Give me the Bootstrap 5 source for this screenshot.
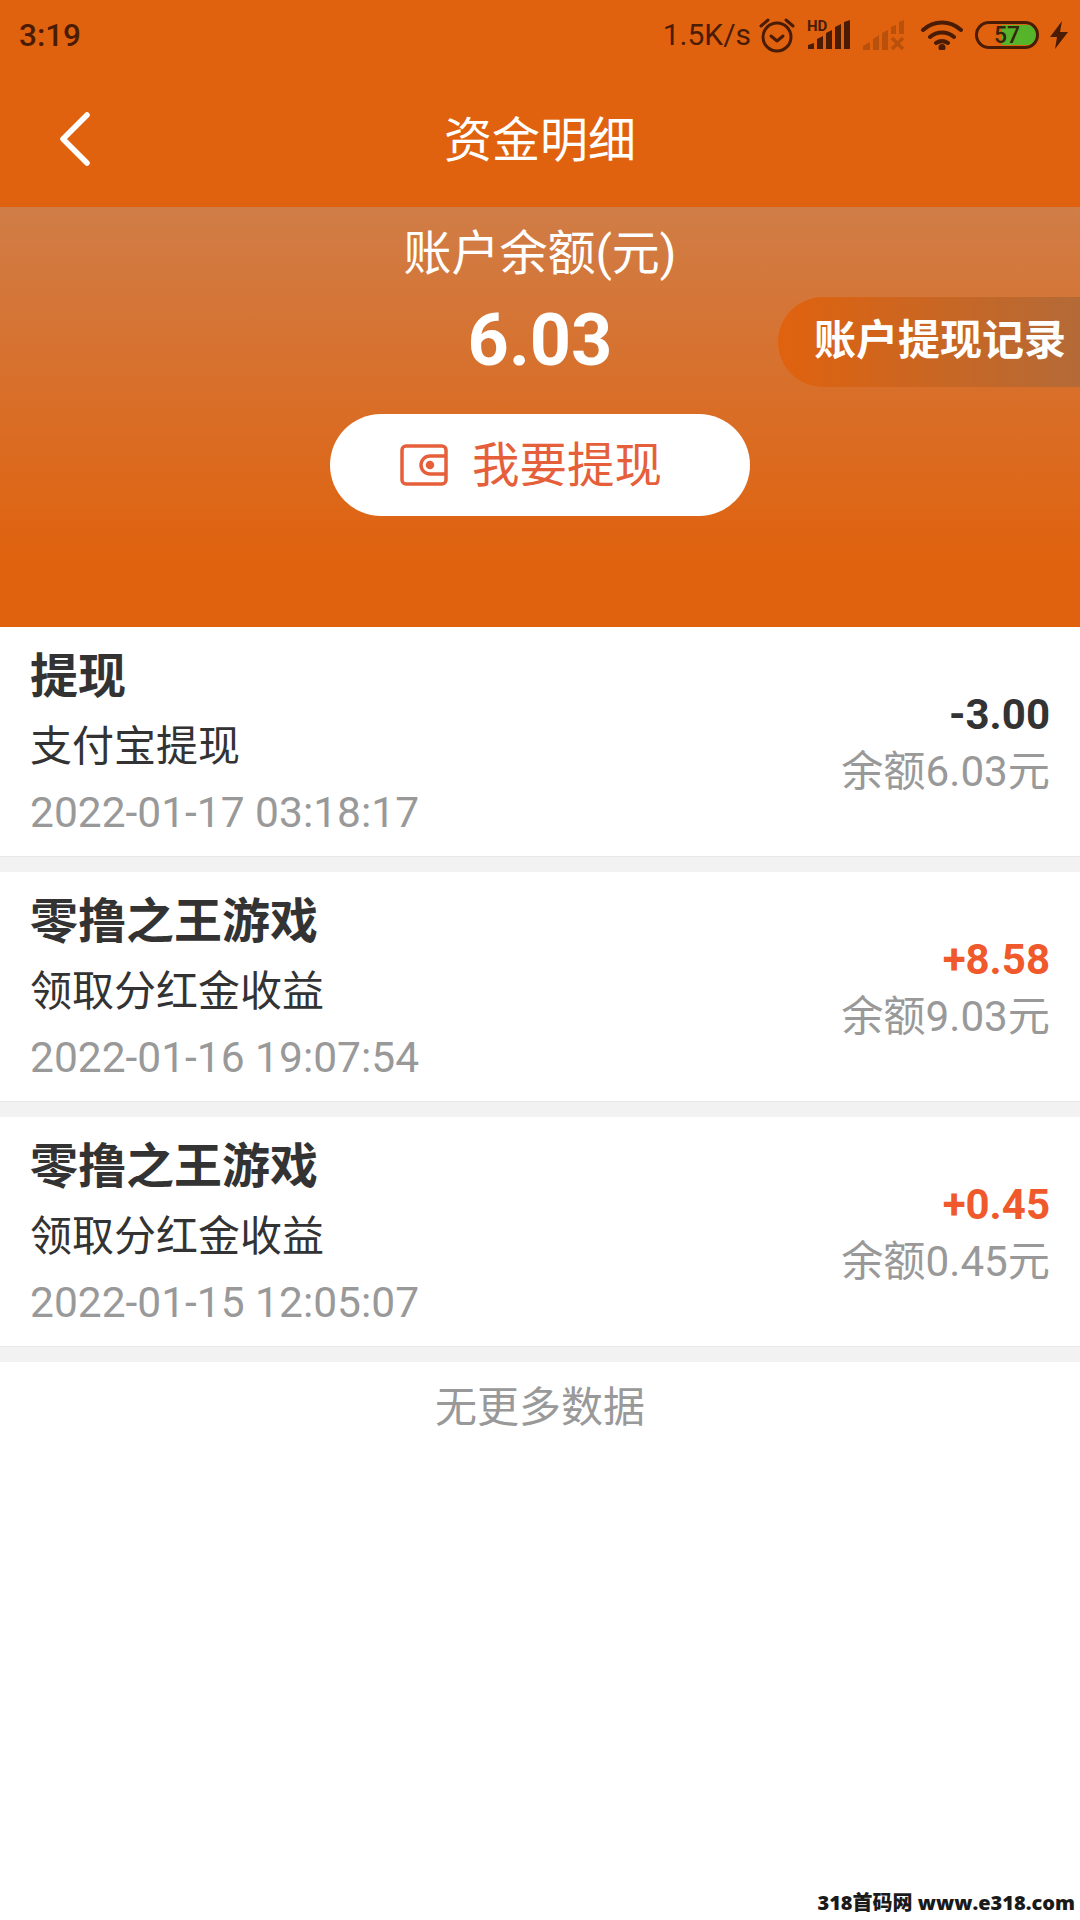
<!DOCTYPE html>
<html lang="zh">
<head>
  <meta charset="UTF-8">
  <title>资金明细</title>
  <meta name="viewport" content="width=device-width, initial-scale=1">
  <link href="https://cdn.jsdelivr.net/npm/bootstrap@5.3.0/dist/css/bootstrap.min.css" rel="stylesheet">
  <style>
    body { font-family: Roboto, "Noto Sans CJK SC", sans-serif; background: #fff; width: 1080px; height: 1920px; overflow: hidden; position: relative; }
    .top-bar { background: #e0620e; height: 207px; }
    .status-row { height: 70px; padding: 0 12px 0 19px; color: #4a1c05; }
    .status-time { font-size: 31.5px; font-weight: 500; line-height: 1; padding-top: 2px; }
    .status-speed { font-size: 30px; line-height: 1; white-space: nowrap; }
    .batt-icon { margin: 0 3px 0 4px; }
    .title-row { height: 137px; padding-top: 5px; }
    .page-title { font-size: 48px; color: #fff; line-height: 1; }
    .back-icon { position: absolute; left: 55px; top: 108px; }
    .balance-panel { height: 420px; background: linear-gradient(#d07d47, #e0620e 85%); position: relative; color: #fff; }
    .balance-label { font-size: 48px; line-height: 62px; padding-top: 16px; }
    .balance-value { font-size: 72px; font-weight: 700; line-height: 84px; margin-top: 14px; }
    .record-pill { position: absolute; right: 0; top: 90px; width: 302px; height: 90px; border-radius: 45px 0 0 45px; background: linear-gradient(90deg, #e0620e, #b46a37); font-size: 42px; font-weight: 700; line-height: 88px; padding-left: 36px; white-space: nowrap; }
    .withdraw-btn { width: 420px; height: 102px; border-radius: 51px; background: #fff; color: #e5603a; font-size: 47.5px; margin-top: 31px; padding-right: 18px; }
    .withdraw-text { padding-top: 3px; }
    .tx-item { height: 230px; padding: 0 30px; border-bottom: 1px solid #e8e8e8; margin-bottom: 15px; }
    .tx-name { font-size: 48px; font-weight: 700; color: #333; line-height: 60px; margin-top: 20px; }
    .tx-desc { font-size: 42px; color: #333; line-height: 60px; margin-top: 10px; }
    .tx-date { font-size: 42.5px; color: #999; line-height: 50px; margin-top: 11px; }
    .tx-amount { font-size: 42px; font-weight: 700; line-height: 50px; color: #333; }
    .tx-plus { color: #f0592b; }
    .tx-balance { font-size: 42.2px; color: #999; line-height: 60px; margin-top: 2px; }
    .tx-side { padding-top: 63px; }
    .tx-gapbar { background: #f2f2f2; height: 15px; margin-top: -15px; }
    .no-more { font-size: 42px; color: #999; line-height: 60px; }
    .watermark { position: absolute; right: 5px; bottom: 2px; font-family: "Open Sans", "Noto Sans CJK SC", sans-serif; font-weight: 800; font-size: 20px; color: #1a1a1a; line-height: 30px; white-space: nowrap; }
  </style>
</head>
<body>

  <div class="top-bar">
    <div class="status-row d-flex align-items-center justify-content-between">
      <span class="status-time">3:19</span>
      <div class="d-flex align-items-center gap-2">
        <span class="status-speed">1.5K/s</span>
        <!-- alarm -->
        <svg width="36" height="36" viewBox="0 0 36 36" fill="none" stroke="#4a1c05" stroke-width="3" stroke-linecap="round" stroke-linejoin="round">
          <circle cx="18" cy="20" r="14"/><path d="M12 19l6 5 6-5"/><path d="M2 9l7-6M34 9l-7-6"/>
        </svg>
        <!-- hd signal -->
        <svg width="44" height="32" viewBox="0 0 44 32" fill="#4a1c05" class="ms-1">
          <text x="0" y="12" font-family="Roboto" font-weight="700" font-size="15">HD</text>
          <path d="M1 30v-4l6-2v6zM10 30V20l6-3v13zM19 30V14l6-3v19zM28 30V8l6-3v25zM37 30V3l6-2v29z"/>
        </svg>
        <!-- second signal, no sim -->
        <svg width="42" height="30" viewBox="0 0 42 30" fill="#4a1c05" opacity=".25" class="ms-1">
          <path d="M0 30v-4l7-4v8zM10 30V19l6-4v15zM19 30V13l6-3v20z"/><path d="M28 14V7l5-2v9zM36 14V2l5-2v14z"/><path d="M29 18l11 11M40 18L29 29" stroke="#4a1c05" stroke-width="3.500" fill="none"/>
        </svg>
        <!-- wifi -->
        <svg width="42" height="30" viewBox="0 0 42 30" fill="none" stroke="#4a1c05" stroke-width="4" stroke-linecap="round" class="ms-2">
          <path d="M2 10c11-10 27-10 38 0M9 17c7-6 17-6 24 0M15 23c4-2.500 8-2.500 12 0"/><circle cx="21" cy="27.500" r="1.500" fill="#4a1c05"/>
        </svg>
        <!-- battery -->
        <svg width="64" height="28" viewBox="0 0 64 28" class="batt-icon">
          <path d="M27 4h26a9 9 0 0 1 0 20H27z" fill="#56b42a"/>
          <rect x="1.500" y="1.500" width="61" height="25" rx="12.500" fill="none" stroke="#4a1c05" stroke-width="3"/>
          <text x="32" y="22" text-anchor="middle" font-family="Roboto" font-weight="500" font-size="23" fill="#34260a">57</text>
        </svg>
        <!-- bolt -->
        <svg width="18" height="28" viewBox="0 0 18 28" fill="#4a1c05">
          <path d="M12 0L0 16h7l-2 12L18 11h-8z"/>
        </svg>
      </div>
    </div>
    <div class="title-row d-flex align-items-center justify-content-center">
      <span class="page-title">资金明细</span>
    </div>
    <svg class="back-icon" width="40" height="62" viewBox="0 0 40 62" fill="none" stroke="#fff" stroke-width="5.500" stroke-linecap="round" stroke-linejoin="round">
      <path d="M32 7L8 31l24 24"/>
    </svg>
  </div>

  <div class="balance-panel d-flex flex-column align-items-center">
    <div class="balance-label">账户余额(元)</div>
    <div class="balance-value">6.03</div>
    <div class="record-pill">账户提现记录</div>
    <div class="withdraw-btn d-flex align-items-center justify-content-center">
      <svg width="48" height="42" viewBox="0 0 48 42" fill="none" stroke="#e5603a" stroke-width="3.500" stroke-linejoin="round" class="me-4">
        <rect x="2" y="2" width="44" height="38" rx="4"/>
        <path d="M46 12H30a9 9 0 0 0 0 18h16"/>
        <circle cx="30" cy="21" r="2.500" fill="#e5603a"/>
      </svg>
      <span class="withdraw-text">我要提现</span>
    </div>
  </div>

  <div class="tx-list">
    <div class="tx-item d-flex justify-content-between">
      <div>
        <div class="tx-name">提现</div>
        <div class="tx-desc">支付宝提现</div>
        <div class="tx-date">2022-01-17 03:18:17</div>
      </div>
      <div class="tx-side text-end">
        <div class="tx-amount">-3.00</div>
        <div class="tx-balance">余额6.03元</div>
      </div>
    </div>
    <div class="tx-gapbar"></div>
    <div class="tx-item d-flex justify-content-between">
      <div>
        <div class="tx-name">零撸之王游戏</div>
        <div class="tx-desc">领取分红金收益</div>
        <div class="tx-date">2022-01-16 19:07:54</div>
      </div>
      <div class="tx-side text-end">
        <div class="tx-amount tx-plus">+8.58</div>
        <div class="tx-balance">余额9.03元</div>
      </div>
    </div>
    <div class="tx-gapbar"></div>
    <div class="tx-item d-flex justify-content-between">
      <div>
        <div class="tx-name">零撸之王游戏</div>
        <div class="tx-desc">领取分红金收益</div>
        <div class="tx-date">2022-01-15 12:05:07</div>
      </div>
      <div class="tx-side text-end">
        <div class="tx-amount tx-plus">+0.45</div>
        <div class="tx-balance">余额0.45元</div>
      </div>
    </div>
    <div class="tx-gapbar"></div>
  </div>

  <div class="no-more text-center pt-3">无更多数据</div>

  <div class="watermark">318首码网 www.e318.com</div>

</body>
</html>
